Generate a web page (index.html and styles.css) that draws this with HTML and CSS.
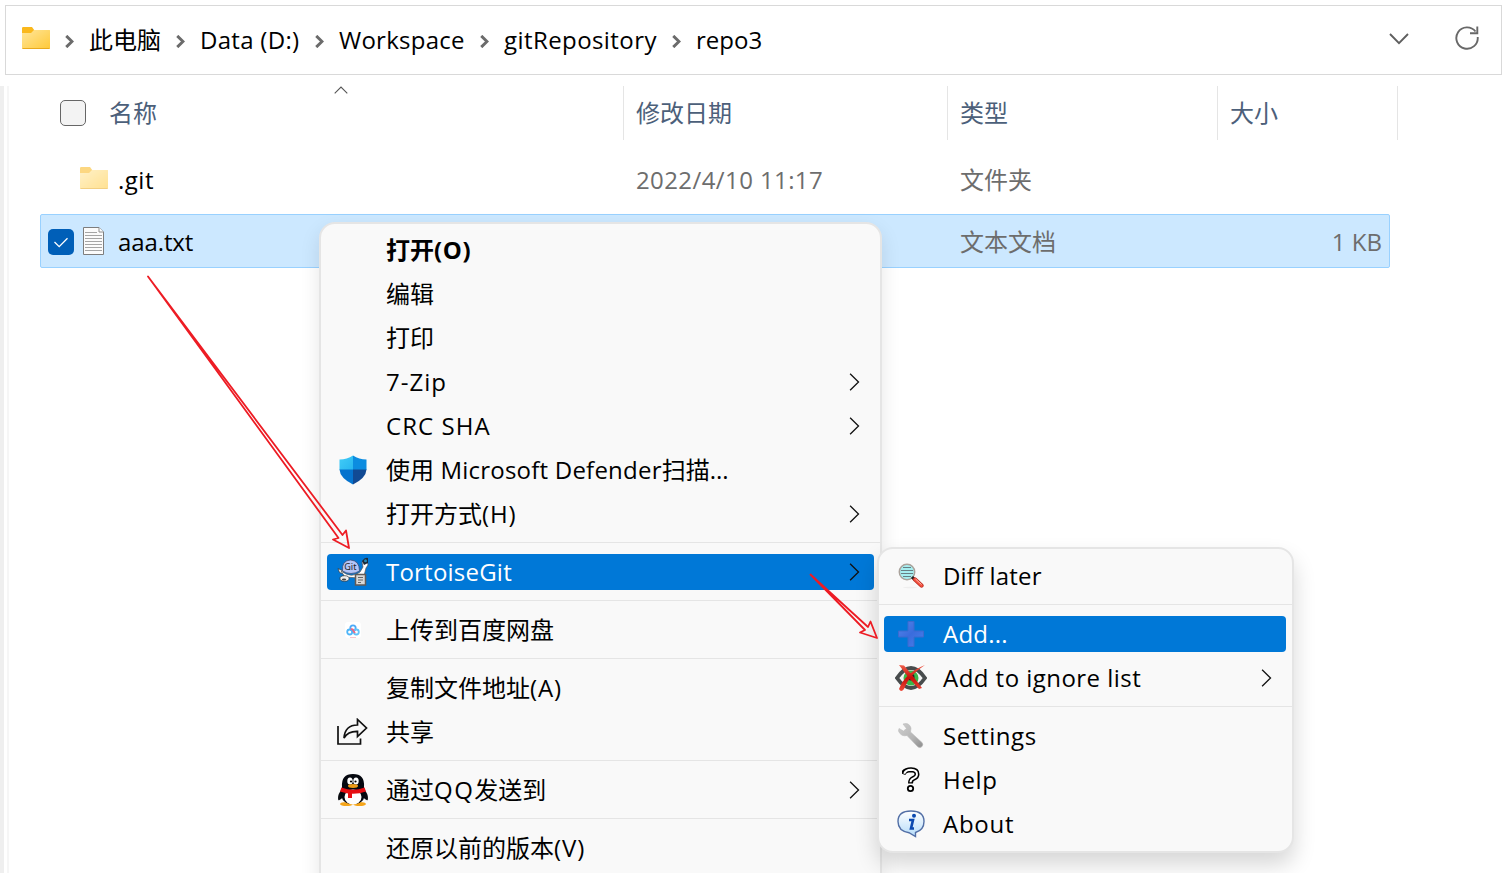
FILE: index.html
```html
<!DOCTYPE html>
<html lang="zh-CN">
<head>
<meta charset="utf-8">
<title>repo3</title>
<link rel="stylesheet" href="styles.css">
</head>
<body>
<svg class="defs" width="0" height="0">
  <defs>
    <linearGradient id="fold" x1="0" y1="0" x2="1" y2="1"><stop offset="0" stop-color="#ffe69b"/><stop offset="1" stop-color="#ffc938"/></linearGradient>
    <linearGradient id="blue" x1="0" y1="0" x2="1" y2="1"><stop offset="0" stop-color="#5585ea"/><stop offset=".5" stop-color="#3a6cdc"/><stop offset="1" stop-color="#4a80ea"/></linearGradient>
    <linearGradient id="metal" x1="0" y1="0" x2="1" y2="1"><stop offset="0" stop-color="#cfcfcf"/><stop offset=".6" stop-color="#b4b4b4"/><stop offset="1" stop-color="#8c8c8c"/></linearGradient>
    <linearGradient id="bubble" x1="0" y1="0" x2="0" y2="1"><stop offset="0" stop-color="#ffffff"/><stop offset="1" stop-color="#b5dcfa"/></linearGradient>
    <linearGradient id="cross" x1="0" y1="0" x2="0" y2="1"><stop offset="0" stop-color="#f0604c"/><stop offset=".5" stop-color="#c90d08"/><stop offset="1" stop-color="#ee4b3b"/></linearGradient>
    <linearGradient id="sh1" x1="0" y1="0" x2="1" y2="1"><stop offset="0" stop-color="#43cdf7"/><stop offset="1" stop-color="#27b5ef"/></linearGradient>
    <symbol id="folder" viewBox="0 0 28 22"><path d="M0 1.2Q0 0 1.2 0H10L12.5 3.500H28V7H0Z" fill="#fab81c"/><path d="M0 6H9L12 3H27Q28 3 28 4V21Q28 22 27 22H1Q0 22 0 21Z" fill="url(#fold)"/><path d="M.5 21.500H27.500" stroke="#e9a91d"/></symbol>
    <symbol id="crumb" viewBox="0 0 8 12"><path d="M1 .8L6.300 6L1 11.200" fill="none" stroke="#6b6b6b" stroke-width="2.700"/></symbol>
    <symbol id="more" viewBox="0 0 10 18"><path d="M.6 .8L9 9L.6 17.200" fill="none" stroke="#111" stroke-width="1.300"/></symbol>
  </defs>
</svg>

<nav class="address">
  <svg class="folder"><use href="#folder"/></svg>
  <svg class="crumb"><use href="#crumb"/></svg><span class="p1">此电脑</span>
  <svg class="crumb"><use href="#crumb"/></svg><span class="p2">Data (D:)</span>
  <svg class="crumb"><use href="#crumb"/></svg><span class="p3">Workspace</span>
  <svg class="crumb"><use href="#crumb"/></svg><span class="p4">gitRepository</span>
  <svg class="crumb"><use href="#crumb"/></svg><span class="p5">repo3</span>
  <svg class="drop" viewBox="0 0 20 12"><path d="M1 1L10 10.200L19 1" fill="none" stroke="#5f5f5f" stroke-width="1.900"/></svg>
  <svg class="refresh" viewBox="0 0 24 24"><path d="M20.500 5.500A10.700 10.700 0 1 0 22.700 11M15 7.300H22.300V.5" fill="none" stroke="#686868" stroke-width="1.900"/></svg>
</nav>

<main class="files">
  <header class="heads">
    <div class="col name"><i class="box"></i><span>名称</span>
      <svg class="sort" viewBox="0 0 14 8"><path d="M.7 7.300L7 1L13.300 7.300" fill="none" stroke="#555" stroke-width="1.100"/></svg></div>
    <div class="col date">修改日期</div>
    <div class="col type">类型</div>
    <div class="col size">大小</div>
  </header>
  <div class="row">
    <div class="cell name"><svg class="folder pale"><use href="#folder"/></svg><span class="g">.git</span></div>
    <div class="cell date">2022/4/10 11:17</div>
    <div class="cell type">文件夹</div>
    <div class="cell size"></div>
  </div>
  <div class="row selected">
    <div class="cell name">
      <svg class="check" viewBox="0 0 26 26"><rect width="26" height="26" rx="5" fill="#005fb8"/><path d="M6.500 13L11.200 17.700L19.500 9.300" fill="none" stroke="#fff" stroke-width="1.300"/></svg>
      <svg class="doc" viewBox="0 0 21 28"><path d="M.5 .5H16L20.500 5V27.500H.5Z" fill="#fbfbfb" stroke="#7d7d7d"/><path d="M16 .5V5H20.500" fill="#fff" stroke="#8c8c8c"/><path d="M2 5.500H14M2 8.500H19M2 11.500H19M2 14.500H19M2 17.500H19M2 20.500H19M2 23.500H19" stroke="#a5a5a5"/></svg>
      <span class="a">aaa.txt</span></div>
    <div class="cell date"></div>
    <div class="cell type">文本文档</div>
    <div class="cell size">1 KB</div>
  </div>
</main>

<div class="menu main">
  <div class="item"><span class="icon"></span><b>打开<em class="bo">(O)</em></b></div>
  <div class="item"><span class="icon"></span><span>编辑</span></div>
  <div class="item"><span class="icon"></span><span>打印</span></div>
  <div class="item"><span class="icon"></span><span class="zip">7-Zip</span><svg class="more"><use href="#more"/></svg></div>
  <div class="item"><span class="icon"></span><span class="crc">CRC SHA</span><svg class="more"><use href="#more"/></svg></div>
  <div class="item"><span class="icon"><svg width="28" height="30" viewBox="0 0 28 30"><path d="M14 .5Q8 4.500 .5 4.500V15H14Z" fill="url(#sh1)"/><path d="M14 .5Q20 4.500 27.500 4.500V15H14Z" fill="#0c8ce0"/><path d="M.5 14.500Q1 23 14 29.500V14.500Z" fill="#0573ce"/><path d="M27.500 14.500Q27 23 14 29.500V14.500Z" fill="#114a94"/></svg></span><span>使用<em class="def"> Microsoft Defender</em>扫描<em>...</em></span></div>
  <div class="item"><span class="icon"></span><span>打开方式<em class="o">(H)</em></span><svg class="more"><use href="#more"/></svg></div>
  <hr>
  <div class="item hot"><span class="icon"><svg width="32" height="30" viewBox="0 0 32 30">
    <path d="M1 11.500L6 14L7 17L2.500 15.500Z" fill="#fff" stroke="#333" stroke-width=".7"/>
    <path d="M4 14Q15 22 23 15L26 10L25 5L30 3L31 8L29 11L27 19L22 21L8 20Z" fill="#fff" stroke="#555" stroke-width=".7"/>
    <path d="M5.500 14Q4.500 3.500 13.500 3Q22.500 3.500 22.500 14Q14 19 5.500 14Z" fill="#b4c5f7" stroke="#465078" stroke-width=".8"/>
    <path d="M25 4Q28 0 31 1V6L27 8Z" fill="#1d2a38"/><circle cx="28.500" cy="3.700" r="1.500" fill="#2789b3"/>
    <ellipse cx="7.500" cy="21.500" rx="4.500" ry="2.800" fill="#eee" stroke="#333" stroke-width=".7"/><ellipse cx="7" cy="22.500" rx="2.200" ry="1" fill="#444"/>
    <text x="7.300" y="13.300" class="git">Git</text>
    <rect x="18.500" y="17.500" width="10" height="10.500" fill="#d8d8d8" stroke="#625b57" stroke-width="1.500"/><path d="M21 20.500H26M21 23H26M21 25.500H24" stroke="#666" stroke-width="1"/></svg></span><span class="tg">TortoiseGit</span><svg class="more"><use href="#more"/></svg></div>
  <hr>
  <div class="item"><span class="icon"><svg width="16" height="16" viewBox="0 0 16 16"><rect width="16" height="16" rx="3" fill="#fff"/><g fill="none" stroke-width="1.800"><circle cx="8" cy="6" r="2.700" stroke="#4ca9f7"/><circle cx="4.700" cy="10" r="2.500" stroke="#4eb5f8"/><circle cx="11.300" cy="10" r="2.500" stroke="#62c3fa"/><path d="M5.700 7.400Q8 6.500 8.500 9L10 11" stroke="#ee6681"/></g><path d="M5 15.500H11" stroke="#f4aaba" stroke-width=".7"/></svg></span><span>上传到百度网盘</span></div>
  <hr>
  <div class="item"><span class="icon"></span><span>复制文件地址<em class="o">(A)</em></span></div>
  <div class="item"><span class="icon"><svg class="share" width="31" height="28" viewBox="0 0 31 28"><path d="M1 8V26H23.500V20.500M7 20Q8 7 20.500 7V1.500L29.500 10L20.500 18.500V13.300Q11 13 7 20Z" fill="none" stroke="#111" stroke-width="1.700"/></svg></span><span>共享</span></div>
  <hr>
  <div class="item"><span class="icon"><svg width="30" height="32" viewBox="0 0 30 32">
    <ellipse cx="8.500" cy="30" rx="6.500" ry="2" fill="#f5a51a"/><ellipse cx="21.500" cy="30" rx="6.500" ry="2" fill="#f5a51a"/>
    <path d="M4 15Q-1 21 .3 26Q2 27 5 23ZM26 15Q31 21 29.700 26Q28 27 25 23Z" fill="#090b10"/>
    <path d="M4 13Q3 0 15 0Q27 0 26 13Q30 30 15 30Q0 30 4 13Z" fill="#05080f"/>
    <ellipse cx="15" cy="23" rx="8.500" ry="7.500" fill="#fff"/><ellipse cx="12" cy="7" rx="2.700" ry="3.500" fill="#fff"/><ellipse cx="18" cy="7" rx="2.700" ry="3.500" fill="#fff"/><circle cx="13" cy="7.500" r="1.100"/><circle cx="17.500" cy="7.500" r="1.100"/>
    <ellipse cx="15" cy="12" rx="5" ry="1.900" fill="#ed9b16"/>
    <path d="M3.500 13.500Q15 18 26.500 13.500L28 17.500Q15 22 2 17.500Z" fill="#e60e12"/><path d="M10 18H14V24H10Z" fill="#e60e12"/></svg></span><span>通过<em class="qq">QQ</em>发送到</span><svg class="more"><use href="#more"/></svg></div>
  <hr>
  <div class="item"><span class="icon"></span><span>还原以前的版本<em class="o">(V)</em></span></div>
</div>

<div class="menu sub">
  <div class="item"><span class="icon"><svg width="26" height="26" viewBox="0 0 26 26"><ellipse cx="12" cy="24.500" rx="7" ry=".8" fill="#eee"/><circle cx="9" cy="9" r="7.700" fill="#a6eef0" stroke="#aaa29b" stroke-width="1.500"/><path d="M5 4.500H13M3 7.500H15M3 10.500H15M5 13.500H13" stroke="#677f84" stroke-width="1.200"/><path d="M14 14L16.500 16.500" stroke="#222" stroke-width="3"/><path d="M17 16.500L23.500 22.500" stroke="#b92a1d" stroke-width="4.200" stroke-linecap="round"/><path d="M17 16.500L23.500 22.500" stroke="#f4503e" stroke-width="2.700" stroke-linecap="round"/><path d="M17.500 16L23.500 21.500" stroke="#ffc5ba" stroke-width=".9"/></svg></span><span class="dl">Diff later</span></div>
  <hr>
  <div class="item hot"><span class="icon"><svg width="26" height="26" viewBox="0 0 26 26"><path d="M10 .5H16V10H25.500V16H16V25.500H10V16H.5V10H10Z" fill="url(#blue)" stroke="#3b6bcf"/></svg></span><span class="ad">Add...</span></div>
  <div class="item"><span class="icon"><svg width="32" height="28" viewBox="0 0 32 28"><path d="M2 14Q16 -6 30 14Q16 34 2 14Z" fill="#f3f3f3" stroke="#484c4d" stroke-width="3.800"/><circle cx="16" cy="14" r="7.500" fill="#3bb64a"/><circle cx="16" cy="13" r="3.500" fill="#222"/><path d="M4 1L9 1.500Q19 13 27 24L24 25Q13 14 4 1ZM30 1Q14 11 9 25Q6 29 4 25Q10 9 30 1Z" fill="url(#cross)"/></svg></span><span class="ig">Add to ignore list</span><svg class="more"><use href="#more"/></svg></div>
  <hr>
  <div class="item"><span class="icon"><svg width="26" height="26" viewBox="0 0 26 26"><path d="M5 1Q11 -1 13 5L12.500 9L24 19.500Q26 22 23.500 24Q21 25.500 19 23L9 12.500Q3 14 .5 8L1 5.500L5.500 8L8.500 5.500Z" fill="url(#metal)" stroke="#bcbcbc" stroke-width=".6"/></svg></span><span class="se">Settings</span></div>
  <div class="item"><span class="icon"><svg width="18" height="26" viewBox="0 0 18 26"><path d="M1 7.200Q2.500 2.800 9 2.800Q15 3 15 7.200Q15 10 11.500 11.300Q8.500 12.500 8.500 16.500" fill="none" stroke="#000" stroke-width="5"/><path d="M2.200 6.800Q3.500 2.800 9 2.800Q15 3 15 7.200Q15 10 11.500 11.300Q8.500 12.500 8.500 15.200" fill="none" stroke="#fff" stroke-width="1.900"/><circle cx="8.500" cy="21.500" r="2.700" fill="#fff" stroke="#000" stroke-width="1.800"/></svg></span><span class="he">Help</span></div>
  <div class="item"><span class="icon"><svg width="28" height="28" viewBox="0 0 28 28"><path d="M14 1Q27 1 27 11.500Q27 20 18.500 22.500L18.500 26.500L12 22.700Q1 21 1 11.500Q1 1 14 1Z" fill="url(#bubble)" stroke="#526fa6" stroke-width="1.400"/><circle cx="17" cy="5.700" r="2" fill="#0b49b0"/><path d="M12 10H16L14 18.500H17" fill="none" stroke="#0b49b0" stroke-width="2.600"/></svg></span><span class="ab">About</span></div>
</div>

<svg class="arrows" viewBox="0 0 1509 873"><g fill="none" stroke="#ed1c24" stroke-width="1.800" stroke-linejoin="round"><path d="M148 276.500L338.500 538L333 539.500L349 548L346 530.500L342.500 535Z"/><path d="M810.500 574.500L865 630L860 632.500L877 638L870.500 621.500L868 627Z"/></g></svg>
</body>
</html>
```
FILE: styles.css
```css
* { box-sizing: border-box; }
body {
  position: relative;
  width: 1509px;
  height: 873px;
  margin: 0;
  overflow: hidden;
  background: #fff;
  color: #000;
  font: 24px/32px "Open Sans", "Noto Sans CJK SC", sans-serif;
  white-space: nowrap;
}
svg { display: block; flex: none; }
em { font-style: normal; }
.defs { position: absolute; }

.address {
  display: flex;
  align-items: center;
  width: 1497px;
  height: 70px;
  margin: 5px 0 0 5px;
  padding: 0 22px 0 16px;
  border: 1px solid #d9d9d9;
}
.address span { flex: none; }
.folder { width: 28px; height: 22px; }
.address .folder { margin-top: -4px; }
.crumb { width: 9px; height: 13px; margin: 2px 15px 0 15px; }
.p1 { width: 72px; }
.p2 { width: 100px; letter-spacing: .3px; }
.p3 { width: 126px; letter-spacing: .25px; }
.p4 { width: 153px; letter-spacing: .42px; }
.drop { width: 20px; height: 12px; margin: -2px 46px 0 auto; }
.refresh { width: 24px; height: 24px; margin-top: -4px; }

.files {
  width: 1509px;
  height: 787px;
  margin-top: 11px;
  padding-left: 32px;
  border-left: 4px solid #efefef;
  background: linear-gradient(#f6f6f6, #f6f6f6) 3px 0 / 2px 100% no-repeat;
}
.heads { display: flex; height: 54px; color: #4c607a; }
.col { display: flex; align-items: center; height: 54px; padding-bottom: 1px; border-right: 1px solid #e5e5e5; }
.name { position: relative; width: 588px; }
.date { width: 324px; padding-left: 12px; }
.type { width: 270px; padding-left: 12px; }
.size { width: 180px; padding-left: 12px; }
.box { width: 26px; height: 26px; margin: 1px 23px 0 24px; border: 1px solid #666; border-radius: 5px; background: #f3f3f3; }
.sort { position: absolute; left: 298px; top: 0; width: 14px; height: 8px; }
.row { display: flex; align-items: center; width: 1350px; height: 54px; margin: 12px 0 0 4px; padding-top: 2px; color: #6d6d6d; }
.selected { margin-top: 8px; border: 1px solid #99d1ff; border-radius: 2px; background: #cce8ff; }
.cell { display: flex; align-items: center; }
.cell.name { width: 584px; color: #000; }
.selected .cell.name { width: 583px; }
.cell.date { letter-spacing: .4px; }
.cell.size { width: 172px; }
.selected .size { width: 171px; padding-right: 7px; justify-content: flex-end; }
.pale { margin: -4px 10px 0 40px; opacity: .55; }
.g { letter-spacing: .5px; }
.a { letter-spacing: -.1px; }
.check { width: 26px; height: 26px; margin-left: 7px; }
.doc { width: 21px; height: 28px; margin: -2px 14px 0 9px; }

.menu { position: absolute; display: flex; flex-direction: column; border: 2px solid #e5e5e5; background: #f9f9f9; }
.menu > * { flex: none; }
.main.menu { left: 319px; top: 222px; width: 563px; height: 680px; padding-top: 4px; border-radius: 16px; box-shadow: 0 8px 20px rgba(0, 0, 0, .1); }
.menu.sub { left: 877px; top: 547px; width: 417px; height: 306px; padding-top: 5px; border-radius: 16px; box-shadow: 0 12px 22px rgba(0, 0, 0, .16); }
.item { display: flex; align-items: center; height: 44px; padding-right: 20px; }
.icon { display: flex; justify-content: center; flex: none; width: 65px; }
.main .icon { padding-right: 2px; }
.sub .icon { width: 64px; }
.hot { height: 36px; margin: 4px 6px; padding-right: 14px; border-radius: 4px; background: #0078d7; color: #fff; }
.hot .icon { margin-left: -6px; }
.sub .hot { margin-left: 5px; }
.sub .hot .icon { margin-left: -5px; }
hr { width: 100%; height: 1px; margin: 6px 0 7px; border: 0; background: #e5e5e5; }
.more { width: 11px; height: 18px; margin-left: auto; }
.git { font: 9px "Noto Sans", sans-serif; fill: #222; }
.share { margin-right: 1px; }
.bo { letter-spacing: .6px; }
.o { letter-spacing: .9px; }
.zip { letter-spacing: 1px; }
.crc { letter-spacing: 1.05px; }
.def { letter-spacing: .22px; }
.tg, .ad { letter-spacing: .22px; }
.qq { letter-spacing: 1.5px; }
.dl { letter-spacing: .15px; }
.ig { letter-spacing: .46px; }
.se { letter-spacing: .6px; }
.he { letter-spacing: .7px; }
.ab { letter-spacing: .75px; }

.arrows { position: absolute; left: 0; top: 0; width: 1509px; height: 873px; }
```
